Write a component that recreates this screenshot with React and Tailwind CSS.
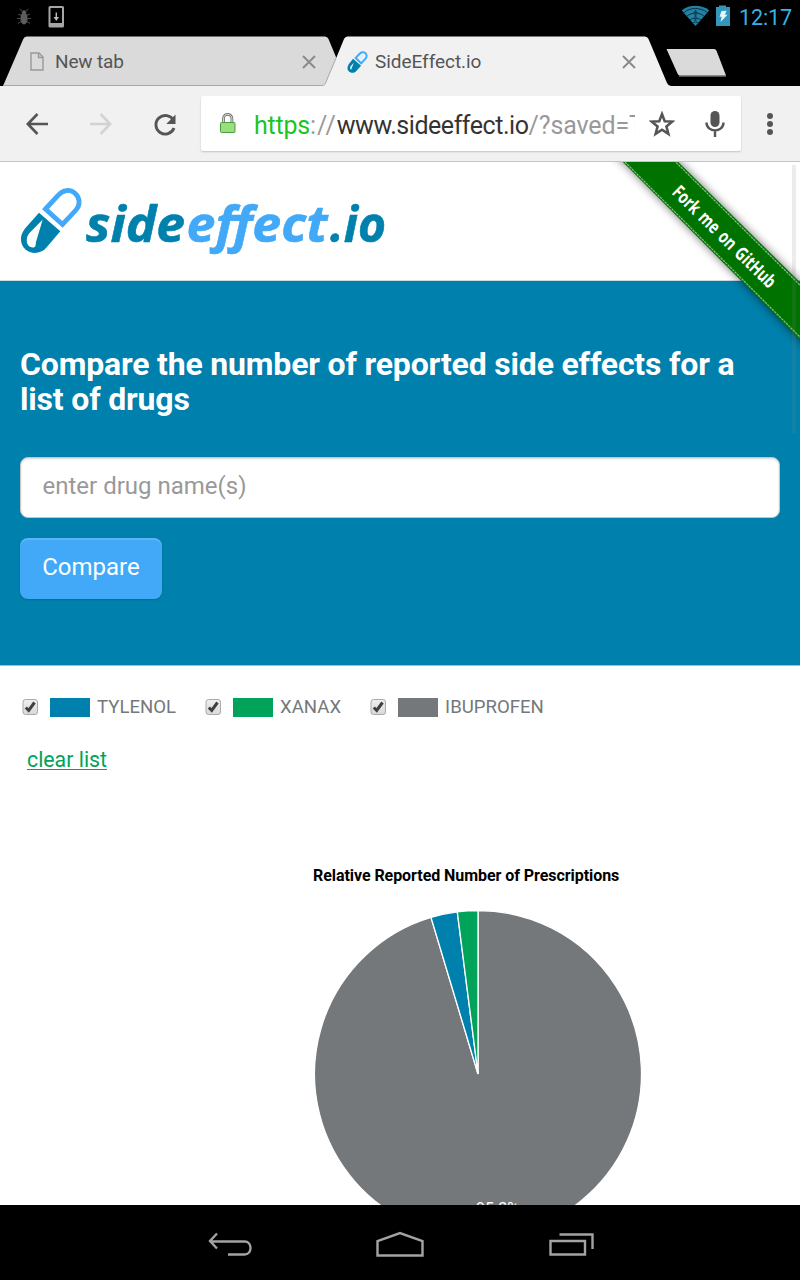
function StatusBar() {
  return (
    <div className="flex h-[34px] shrink-0 items-start justify-between bg-black pl-4 pr-[7px]">
      <div className="flex gap-[17px]">
        <svg width="15" height="34" viewBox="16 0 15 34" fill="none" stroke="#4c4c4c" strokeWidth="1">
          <ellipse cx="24" cy="18.5" rx="3.6" ry="6" fill="#5c5c5c" stroke="none" />
          <circle cx="24" cy="12.4" r="2.2" fill="#5c5c5c" stroke="none" />
          <path d="M22.5 11.5 19.5 9M25.5 11.5 28.5 9M21 15.5l-3-1.5M27 15.5l3-1.5M20.500 18.500H17M27.500 18.500H31M21 21.500 18 23.500M27 21.500 30 23.500" />
        </svg>
        <svg width="18" height="34" viewBox="48 0 18 34">
          <path fillRule="evenodd" fill="#a6a6a6" d="M50 6h12.500a1.500 1.500 0 0 1 1.500 1.500V26a1.500 1.500 0 0 1-1.500 1.500H50A1.500 1.500 0 0 1 48.500 26V7.500A1.500 1.500 0 0 1 50 6zM50.500 8v15H62V8z" />
          <path d="M56.300 12.500v6" stroke="#bbb" strokeWidth="1.400" />
          <path d="M53.500 17h5.600L56.300 21z" fill="#bbb" />
        </svg>
      </div>
      <div className="flex">
        <svg width="28" height="34" viewBox="682 0 28 34" fill="none">
          <path d="M695.500 26 681.800 10.500C689 4.300 702 4.300 709.200 10.500z" fill="#2381a6" />
          <path d="M683.500 12.800c7-5.800 17-5.800 24 0M686.700 16.300c5.200-4.300 12.400-4.300 17.600 0M690 20c3.400-2.600 7.600-2.600 11 0" stroke="#0b3343" strokeWidth="1" />
          <path d="M692 23.200c2.300-1.500 4.700-1.500 7 0" stroke="#0b3343" />
          <path d="M695.500 9.500 698.500 14h-2v7h-2v-7h-2z" fill="#124558" />
        </svg>
        <svg className="ml-[6px]" width="14" height="34" viewBox="716 0 14 34">
          <path d="M719 5.500h7V7h4v19h-14V7h3z" fill="#3596bd" />
          <path d="m721.500 11 5-.2-1.500 4h2.500L720.500 22l1.200-5.200h-2.200z" fill="#e4f4fb" />
        </svg>
        <span className="ml-[9px] mt-1 w-[54px] whitespace-nowrap font-['Roboto',sans-serif] text-[21.500px] leading-[27px] tracking-[-0.100px] text-[#33b5e5]">12:17</span>
      </div>
    </div>
  );
}

function CloseIcon() {
  return (
    <svg width="14" height="14" viewBox="0 0 14 14" stroke="#8b8b8b" strokeWidth="2">
      <path d="M1 1l12 12M13 1 1 13" />
    </svg>
  );
}

function PillIcon({ className, light = 4.8 }) {
  return (
    <svg className={className} viewBox="20 187 63 67">
      <path d="M45.500 209 58 195.500C63 189.500 70 189 75 193.300c5 4.500 5.500 11.700 1 16.700L62.500 224.500Z" fill="none" stroke="#41a9f7" strokeWidth={light} />
      <path d="M39 212.700 60.300 231.300 46.500 247.500C41 254 31.500 254.700 25.500 249.500 19.500 244 19.500 235.500 25 228.500Z" fill="#0080ac" />
      <path d="M42.700 219.500 29 233.500C25.300 238 25.800 247.500 33 247.500 36 247.500 35.500 245 36 242Z" fill="#fff" />
    </svg>
  );
}

function FavIcon() {
  return (
    <svg className="h-[22px] w-[21px]" viewBox="20 187 63 67">
      <path d="M46 208 58 195.500C63 189.500 70 189 75 193.300c5 4.500 5.500 11.700 1 16.700L62.500 224.500Z" fill="#e4f2fd" stroke="#41a9f7" strokeWidth="6" />
      <path d="M38 210.700 62.300 232.300 46.500 249.500C41 255 31.500 254.700 25.500 249.500 19.500 244 19.500 235.500 25 226.500Z" fill="#0080ac" />
      <path d="M40 223 31 233.500C28.300 238 28.800 244 32 244Z" fill="#fff" />
    </svg>
  );
}

function TabStrip() {
  return (
    <div className="relative h-[52px] shrink-0 bg-black">
      <svg className="absolute left-0 top-0" width="800" height="52" viewBox="0 34 800 52">
        <path d="M3 86 23.300 39q1-2.500 3.500-2.500H325q2.500 0 3.500 2.500L348 86z" fill="#dadada" />
        <path d="M3 85.500H326" stroke="#a9a9a9" />
        <path d="M323 86q2-1 3-3L344 39q1-2.500 3.500-2.500H645q2.500 0 3.500 2.500L667 83q1 2.500 4 3z" fill="#f1f1f1" />
        <path d="M323.500 85.500q1.500-1 2.200-3L336.500 57" fill="none" stroke="#a9a9a9" />
        <path d="M666.500 49H714q1.800 0 2.600 2L726 75.500H680q-1.700 0-2.500-2z" fill="#dadada" />
        <path d="M679 76h47" stroke="#a9a9a9" />
      </svg>
      <div className="relative flex h-full items-center pt-[3px] font-['Roboto',sans-serif] text-[19px] text-[#555]">
        <div className="flex w-[320px] items-center pl-[30px] pr-[4px]">
          <svg width="14" height="19" viewBox="0 0 14 19" fill="none" stroke="#999" strokeWidth="1.400">
            <path d="M1 1h8l4 4v13H1zM8.500 1v4.500H13" />
          </svg>
          <span className="ml-[11px] flex-1 pt-px tracking-[-0.150px]">New tab</span>
          <CloseIcon />
        </div>
        <div className="flex w-[320px] items-center pl-[27px] pr-[4px]">
          <FavIcon />
          <span className="ml-[7px] flex-1 pt-px tracking-[-0.050px]">SideEffect.io</span>
          <CloseIcon />
        </div>
      </div>
    </div>
  );
}

function Toolbar() {
  return (
    <div className="flex h-[76px] shrink-0 items-center border-b border-[#c4c4c4] bg-[#f1f1f1] pl-[26px]">
      <svg width="22" height="22" viewBox="0 0 22 22" fill="none" stroke="#555" strokeWidth="2.600">
        <path d="M11.500 1 1.800 11l9.700 10M2 11h20" />
      </svg>
      <svg className="ml-[42px]" width="22" height="22" viewBox="0 0 22 22" fill="none" stroke="#d3d3d3" strokeWidth="2.600">
        <path d="M10.500 1l9.700 10-9.700 10M20 11H0" />
      </svg>
      <svg className="ml-[41px] mt-[2px]" width="24" height="24" viewBox="0 0 24 24" fill="none">
        <path d="M20.500 7.500A9.300 9.300 0 1 0 21 15" stroke="#555" strokeWidth="2.900" />
        <path d="M22.500 1.500V11h-9.200z" fill="#555" />
      </svg>
      <div className="ml-[24px] flex h-[55px] w-[540px] items-center rounded-[2px] bg-white pl-[18px] shadow-[0_1px_2px_rgba(0,0,0,0.2)]">
        <svg className="mt-px" width="18" height="22" viewBox="0 0 18 22">
          <path d="M4.500 10V5.500a4.200 4.200 0 0 1 8.400 0V10" fill="none" stroke="#777" strokeWidth="2.800" />
          <path d="M4.500 10V5.500a4.200 4.200 0 0 1 8.400 0V10" fill="none" stroke="#ddd" />
          <rect x="1.500" y="9.500" width="14.500" height="10" rx="1" fill="#98e07c" stroke="#4e9b3f" />
        </svg>
        <div className="ml-[17px] mt-[4px] h-[30px] w-[381px] overflow-hidden whitespace-nowrap font-['Roboto',sans-serif] text-[25px] leading-[30px] text-[#999]">
          <span className="tracking-[-0.200px] text-[#1bc41f]">https</span>
          <span className="tracking-[0.900px]">://</span>
          <span className="tracking-[-0.460px] text-[#333]">www.sideeffect.io</span>
          <span className="tracking-[-0.120px]">/?saved=T</span>
        </div>
        <svg className="ml-[14px]" width="26" height="26" viewBox="0 0 26 26" fill="none" stroke="#555" strokeWidth="2.500">
          <path d="m13 3 2.700 7.200 7.700.4-6 4.800 2 7.500L13 18.700l-6.400 4.200 2-7.500-6-4.800 7.700-.4z" />
        </svg>
        <svg className="ml-[30px]" width="20" height="28" viewBox="0 0 20 28" fill="none" stroke="#555" strokeWidth="2.400">
          <rect x="5.500" y="1" width="9" height="16" rx="4.500" fill="#555" stroke="none" />
          <path d="M1.500 12.500c0 10.500 17 10.500 17 0M10 20v7" />
        </svg>
      </div>
      <svg className="ml-[26px]" width="6" height="22" viewBox="0 0 6 22" fill="#555">
        <circle cx="3" cy="3" r="3" />
        <circle cx="3" cy="11" r="3" />
        <circle cx="3" cy="19" r="3" />
      </svg>
    </div>
  );
}

function Ribbon() {
  return (
    <svg className="absolute right-0 top-0" width="200" height="200" viewBox="600 162 200 200">
      <defs>
        <filter id="ribbon-shadow" x="-20%" y="-20%" width="140%" height="140%">
          <feGaussianBlur stdDeviation="5" />
        </filter>
      </defs>
      <path d="M602 141 657 141 820 302 820 360z" fill="#000" opacity=".55" filter="url(#ribbon-shadow)" />
      <path d="M602 141H657L820 302v58z" fill="#007200" />
      <path d="M604 141 820 357M655 141.500 820 305" stroke="#7fba7f" strokeWidth="1.300" strokeDasharray="2.500 .8" fill="none" />
      <text x="0" y="6" transform="translate(724 237) rotate(44.500)" textAnchor="middle" textLength="137" lengthAdjust="spacingAndGlyphs" wordSpacing="2" fill="#fff" fontFamily="'Noto Sans', sans-serif" fontWeight="700" fontSize="18.500">
        Fork me on GitHub
      </text>
    </svg>
  );
}

function Logo() {
  return (
    <div className="flex">
      <PillIcon className="h-[67px] w-[63px]" />
      <svg className="overflow-visible" width="305" height="67" viewBox="83 187 305 67" fontFamily="'Open Sans', sans-serif" fontWeight="700" fontStyle="italic" fontSize="51" strokeWidth=".6">
        <text x="86" y="241.500" textLength="99" lengthAdjust="spacingAndGlyphs" fill="#0080ac" stroke="#0080ac">side</text>
        <text x="186.500" y="241.500" textLength="141" lengthAdjust="spacingAndGlyphs" fill="#41a9f7" stroke="#41a9f7">effect</text>
        <text x="330" y="241.500" textLength="56" lengthAdjust="spacingAndGlyphs" fill="#0080ac" stroke="#0080ac">.io</text>
      </svg>
    </div>
  );
}

function LegendItem({ label, swatch }) {
  return (
    <div className="flex items-center">
      <svg width="17" height="18" viewBox="0 0 17 18">
        <defs>
          <linearGradient id={"box-" + label} x1="0" y1="0" x2="0" y2="1">
            <stop offset="0" stopColor="#efefef" />
            <stop offset="1" stopColor="#d9d9d9" />
          </linearGradient>
        </defs>
        <rect x="1" y="1.500" width="14.500" height="15" rx="2.500" fill={"url(#box-" + label + ")"} stroke="#aaa" />
        <path d="M3.800 9.500 6.700 12.500 12.500 4.500" fill="none" stroke="#404040" strokeWidth="3" />
      </svg>
      <span className={"ml-[11px] mt-px h-[19px] w-10 " + swatch} />
      <span className="ml-[7px]">{label}</span>
    </div>
  );
}

function PieChart() {
  return (
    <svg className="mt-[21px] block" width="800" height="345" viewBox="0 907 800 345" stroke="#fff" strokeWidth="1.300">
      <path d="M478 1074V910.500A163.500 163.500 0 1 1 431 917.400z" fill="#74787b" />
      <path d="M478 1074 431 917.400A163.500 163.500 0 0 1 457.300 911.800z" fill="#0080ac" />
      <path d="M478 1074 457.300 911.800A163.500 163.500 0 0 1 478 910.500z" fill="#00a359" />
      <text x="497.500" y="1213.500" textAnchor="middle" stroke="none" fill="#fff" fontFamily="Roboto, sans-serif" fontSize="16">95.3%</text>
    </svg>
  );
}

function Page() {
  return (
    <div className="relative h-[1043px] shrink-0 overflow-hidden bg-white">
      <header className="h-[119px] border-b border-[#ccdbe2] pl-5 pt-[25px]">
        <Logo />
      </header>
      <section className="h-[384px] bg-[#0080ac] px-5 pt-[66px]">
        <h1 className="whitespace-nowrap font-['Roboto',sans-serif] text-[32px] font-bold leading-[35px] tracking-[-0.180px] text-white">
          Compare the number of reported side effects for a<br />list of drugs
        </h1>
        <div className="mt-[40px] flex h-[61px] items-center rounded-[8px] border border-[#c4c4c4] bg-white pb-[3px] pl-[21.500px] text-[24px] text-[#999] shadow-[inset_0_1px_2px_rgba(0,0,0,0.15)]">
          enter drug name(s)
        </div>
        <button className="mt-5 flex h-[61px] w-[142px] items-center justify-center rounded-[8px] bg-[#41a9f7] pb-[3px] text-[24px] text-white shadow-[inset_0_2px_1px_rgba(255,255,255,0.15),0_1px_2px_rgba(0,0,0,0.15)]">
          Compare
        </button>
      </section>
      <div className="h-px bg-[#8cc6dc]" />
      <div className="flex gap-[29px] pl-[22px] pt-[30px] text-[18.600px] leading-[22px] text-[#74787b]">
        <LegendItem label="TYLENOL" swatch="bg-[#0080ac]" />
        <LegendItem label="XANAX" swatch="bg-[#00a359]" />
        <LegendItem label="IBUPROFEN" swatch="bg-[#74787b]" />
      </div>
      <div className="pl-[27px] pt-[29px] text-[21.300px] leading-[26px]">
        <a className="text-[#00a359] underline decoration-1 underline-offset-2">clear list</a>
      </div>
      <h2 className="mt-[93px] pl-[313px] text-[16px] font-bold leading-5 tracking-[-0.060px] text-black">Relative Reported Number of Prescriptions</h2>
      <PieChart />
      <Ribbon />
      <div className="absolute right-1 top-[3px] h-[268px] w-1 bg-[#808080]/15" />
    </div>
  );
}

function NavBar() {
  return (
    <nav className="flex h-[75px] shrink-0 items-center bg-black pl-[208px] pt-[4px]">
      <svg width="44" height="26" viewBox="208 1232 44 26" fill="none" stroke="#a3a3a3" strokeWidth="2.400">
        <path d="M217 1233.500 210 1241l7 7.500M210 1241.500h34.500c8 0 8 13 0 13H228" />
      </svg>
      <svg className="ml-[124px]" width="48" height="28" viewBox="376 1230 48 28" fill="none" stroke="#a3a3a3" strokeWidth="2.400">
        <path d="M377.500 1254.500V1240l22.500-8 22.500 8v14.500z" />
      </svg>
      <svg className="ml-[125px]" width="46" height="26" viewBox="549 1232 46 26" fill="none" stroke="#a3a3a3" strokeWidth="2.400">
        <path d="M550.500 1241H585v13.500h-34.500zM559.500 1234.500H592.500V1249" />
      </svg>
    </nav>
  );
}

export default function App() {
  return (
    <div className="flex h-[1280px] w-[800px] flex-col overflow-hidden bg-black font-['Roboto',sans-serif]">
      <StatusBar />
      <TabStrip />
      <Toolbar />
      <Page />
      <NavBar />
    </div>
  );
}
